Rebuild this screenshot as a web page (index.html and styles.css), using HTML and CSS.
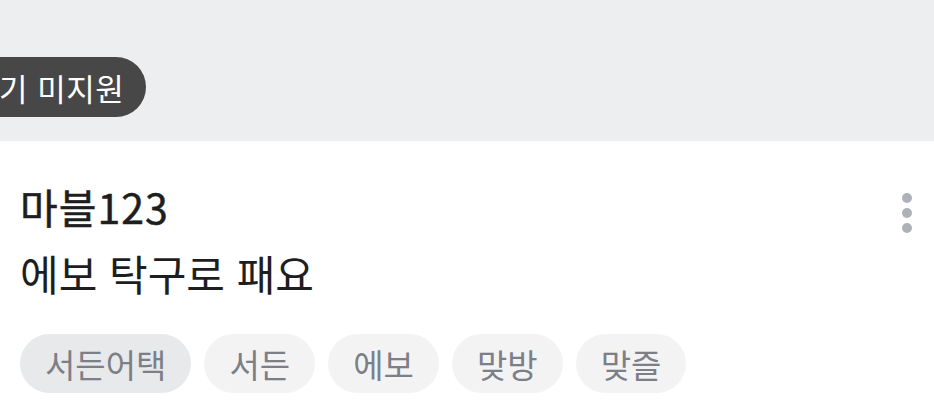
FILE: index.html
```html
<!DOCTYPE html>
<html lang="ko">
<head>
<meta charset="utf-8">
<link rel="stylesheet" href="styles.css">
</head>
<body>
<div class="top">
  <div class="notice">기 미지원</div>
</div>
<div class="post">
  <div class="head">
    <div class="texts">
      <div class="title">마블123</div>
      <div class="body">에보 탁구로 패요</div>
    </div>
    <div class="more"><span></span><span></span><span></span></div>
  </div>
  <div class="chips">
    <span class="chip active">서든어택</span>
    <span class="chip">서든</span>
    <span class="chip">에보</span>
    <span class="chip">맞방</span>
    <span class="chip">맞즐</span>
  </div>
</div>
</body>
</html>
```
FILE: styles.css
```css
* { box-sizing: border-box; }
html, body { margin: 0; padding: 0; }
body {
  width: 934px;
  height: 417px;
  overflow: hidden;
  background: #ffffff;
  font-family: "Noto Sans CJK KR", "Noto Sans", sans-serif;
}
.top {
  height: 141px;
  background: #edeef0;
  padding-top: 57px;
  overflow: hidden;
}
.notice {
  display: inline-flex;
  align-items: center;
  height: 60px;
  margin-left: -30px;
  padding: 0 22px 0 29px;
  background: #474747;
  color: #ffffff;
  border-radius: 0 30px 30px 0;
  font-size: 31px;
  letter-spacing: 0.5px;
}
.post {
  padding: 37px 20px 0 20px;
}
.head {
  display: flex;
  justify-content: space-between;
  align-items: flex-start;
}
.title {
  font-size: 41px;
  font-weight: 400;
  color: #1e1e1e;
  line-height: 56px;
  letter-spacing: 1px;
  -webkit-text-stroke: 0.5px #1e1e1e;
}
.body {
  font-size: 42px;
  color: #1e1e1e;
  line-height: 56px;
  margin-top: 11px;
}
.more {
  display: flex;
  flex-direction: column;
  gap: 5px;
  padding-top: 15px;
  margin-right: 2px;
}
.more span {
  width: 10px;
  height: 10px;
  border-radius: 50%;
  background: #aeb1b7;
}
.chips {
  display: flex;
  gap: 13px;
  margin-top: 33px;
}
.chip {
  height: 59px;
  display: inline-flex;
  align-items: center;
  padding: 0 25px;
  border-radius: 30px;
  background: #f3f3f4;
  color: #7c7f88;
  font-size: 33px;
}
.chip.active { background: #e8e9eb; }
```
